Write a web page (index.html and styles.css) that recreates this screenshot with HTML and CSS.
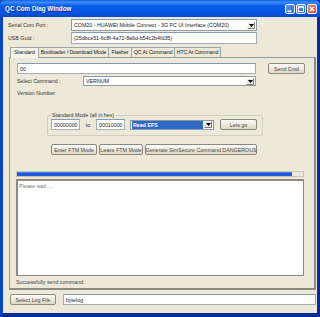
FILE: index.html
```html
<!DOCTYPE html>
<html>
<head>
<meta charset="utf-8">
<link rel="stylesheet" href="styles.css">
</head>
<body>
<div class="window">
  <div class="titlebar">
    <span class="title">QC Com Diag Window</span>
    <div class="tbtns">
      <span class="tb min"><svg width="10" height="10" viewBox="0 0 10 10"><rect x="2.5" y="6.5" width="4" height="1.5" fill="#fff"/></svg></span>
      <span class="tb max"><svg width="10" height="10" viewBox="0 0 10 10"><rect x="2.5" y="2.5" width="5" height="5" fill="none" stroke="#fff" stroke-width="1"/><rect x="2.5" y="2.5" width="5" height="1.3" fill="#fff"/></svg></span>
      <span class="tb close"><svg width="10" height="10" viewBox="0 0 10 10"><path d="M2.8 2.8 L7.2 7.2 M7.2 2.8 L2.8 7.2" stroke="#fff" stroke-width="1.4"/></svg></span>
    </div>
  </div>
  <div class="client">
    <div class="row r-serial">
      <span class="lbl lbl-top">Serial Com Port :</span>
      <div class="combo combo-port"><span class="ctext">COM20 - HUAWEI Mobile Connect - 3G PC UI Interface (COM20)</span><span class="arrow"><svg width="5" height="3" viewBox="0 0 5 3"><path d="M0 0 H5 L2.5 3Z" fill="#000"/></svg></span></div>
    </div>
    <div class="row r-usb">
      <span class="lbl lbl-top">USB Guid :</span>
      <div class="input input-guid">{25dbce51-6c8f-4a72-8a6d-b54c2b4fd35}</div>
    </div>
    <div class="tabs">
      <span class="tab active">Standard</span>
      <span class="tab">Bootloader / Download Mode</span>
      <span class="tab">Flasher</span>
      <span class="tab">QC At Command</span>
      <span class="tab">HTC At Command</span>
    </div>
    <div class="panel">
      <div class="row r-cmd">
        <div class="input input-cmd">00</div>
        <span class="btn btn-send">Send Cmd</span>
      </div>
      <div class="row r-select">
        <span class="lbl lbl-sel">Select Command :</span>
        <div class="combo combo-cmd"><span class="ctext">VERNUM</span><span class="arrow"><svg width="5" height="3" viewBox="0 0 5 3"><path d="M0 0 H5 L2.5 3Z" fill="#000"/></svg></span></div>
      </div>
      <div class="lbl version">Version Number</div>
      <fieldset class="group">
        <legend>Standard Mode (all in hex)</legend>
        <div class="row r-group">
          <div class="input input-hex">00000000</div>
          <span class="to">to</span>
          <div class="input input-hex">00010000</div>
          <div class="combo combo-efs"><span class="ctext sel">Read EFS</span><span class="arrow"><svg width="5" height="3" viewBox="0 0 5 3"><path d="M0 0 H5 L2.5 3Z" fill="#000"/></svg></span></div>
          <span class="btn btn-go">Lets go</span>
        </div>
      </fieldset>
      <div class="row r-ftm">
        <span class="btn btn-enter">Enter FTM Mode</span>
        <span class="btn btn-leave">Leave FTM Mode</span>
        <span class="btn btn-gen">Generate SimSecure Command DANGEROUS</span>
      </div>
      <div class="progress"><div class="fill" style="width:96%"></div></div>
      <div class="log">Please wait ....</div>
      <div class="lbl status">Successfully send command.</div>
    </div>
    <div class="row r-logfile">
      <span class="btn btn-log">Select Log File</span>
      <div class="input input-log">bytelog</div>
    </div>
  </div>
</div>
</body>
</html>
```

FILE: styles.css
```css
* { box-sizing: border-box; }
html, body { margin: 0; padding: 0; background: #fff; }
body { font-family: "Liberation Sans", Arial, sans-serif; font-size: 5.3px; color: #000; }

.window {
  width: 320px; height: 317px;
  background: #0a4fd8;
  border-left: 3px solid #0842c6;
  border-right: 3px solid #0a2a9a;
  border-bottom: 4px solid #0a2a9a;
  display: flex; flex-direction: column;
}
.titlebar {
  height: 17px; flex: none;
  margin: 0 -3px; padding: 0 3px 0 5px;
  background: linear-gradient(#0a5fe8 0%, #3d8cf5 12%, #0a5ce8 35%, #0554e2 75%, #0a48c8 100%);
  border-radius: 5px 5px 0 0;
  display: flex; align-items: center; justify-content: space-between;
}
.title { color: #fff; font-weight: bold; font-size: 6.3px; text-shadow: 1px 1px 0 #0a2a8a; }
.tbtns { display: flex; gap: 1px; margin-top: 1px; }
.tb {
  width: 10px; height: 10px; display: block;
  border: 1px solid #fff; border-radius: 2px;
  background: linear-gradient(135deg, #5a9cf8, #2966e0);
}
.tb svg { display: block; margin: -1px; }
.tb.close { background: linear-gradient(135deg, #ef8a6a, #d2401e); }

.client {
  flex: 1; background: #ece9d8;
  display: flex; flex-direction: column;
  padding: 2px 0 0 3px;
}
.row { display: flex; align-items: center; }
.lbl { color: #333; white-space: nowrap; }
.lbl-top { width: 64px; padding-left: 1px; }
.r-serial { height: 12px; margin-left: 1px; }
.r-usb { height: 12px; margin-top: 1px; margin-left: 1px; }

.input {
  background: #fff; border: 1px solid #a5acb5; border-top-color: #7f9db9;
  padding: 0 2px; white-space: nowrap; overflow: hidden;
  display: flex; align-items: center; color: #222;
}
.combo {
  background: #fff; border: 1px solid #8e9aa8;
  display: flex; align-items: center; justify-content: space-between;
  white-space: nowrap; overflow: hidden; color: #222;
}
.ctext { padding-left: 2px; overflow: hidden; flex: 1; height: 100%; display: flex; align-items: center; }
.arrow {
  width: 8px; height: 7px; margin-right: 1px; flex: none;
  background: #ece9d8; border: 1px solid; border-color: #fff #808080 #808080 #fff;
  display: flex; align-items: center; justify-content: center;
}
.arrow svg { display: block; }
.combo-port { width: 186px; height: 12px; }
.input-guid { width: 186px; height: 12px; }

.tabs { display: flex; margin-top: 3px; margin-left: 4px; height: 10px; position: relative; z-index: 1; }
.tab {
  height: 10px; padding: 0; line-height: 9px; white-space: nowrap; color: #222;
  border: 1px solid #a0a4a8; border-bottom: none; border-left: none;
  background: #ece9d8; text-align: center; letter-spacing: -0.1px;
}
.tab:first-child { border-left: 1px solid #a0a4a8; }
.tab.active { background: #f4f3ee; height: 11px; width: 29px; }
.tabs .tab:nth-child(2) { width: 70px; }
.tabs .tab:nth-child(3) { width: 23px; }
.tabs .tab:nth-child(4) { width: 43px; }
.tabs .tab:nth-child(5) { width: 46px; }

.panel {
  width: 307px; height: 233px; margin-left: 3px; flex: none;
  border: 1px solid #919b9c; border-right: 2px solid #8c8c84; border-bottom: 2px solid #8c8c84;
  background: #ece9d8;
  padding: 5px 0 0 7px;
  display: flex; flex-direction: column;
}
.r-cmd { height: 11px; }
.input-cmd { width: 239px; height: 11px; }
.btn {
  display: flex; align-items: center; justify-content: center; white-space: nowrap;
  border: 1px solid #8a8a80; border-radius: 2px; color: #444;
  background: linear-gradient(#fbfbf8, #ece9d8 60%, #dcd8c6);
  flex: none;
}
.btn-send { width: 37px; height: 11px; margin-left: 12px; }
.r-select { height: 10px; margin-top: 2px; }
.lbl-sel { width: 66px; }
.combo-cmd { width: 173px; height: 10px; }
.version { margin-top: 3px; height: 8px; line-height: 8px; }

.group {
  margin: 15px 0 0 30px; width: 216px; height: 24px;
  border: 1px solid #d0d0bf; border-radius: 2px;
  padding: 0 0 0 3px; min-width: 0;
}
.group legend { padding: 0 1px; margin-left: 0; color: #333; line-height: 6px; }
.r-group { height: 11px; margin-top: 1px; }
.input-hex { width: 29px; height: 11px; }
.to { width: 16px; text-align: center; color: #333; }
.combo-efs { width: 84px; height: 10px; margin-left: 5px; }
.ctext.sel { background: #316ac5; color: #fff; font-weight: bold; margin: 1px; padding-left: 1px; }
.btn-go { width: 37px; height: 11px; margin-left: 6px; }

.r-ftm { height: 11px; margin: 8px 0 0 34px; gap: 2px; }
.btn-enter { width: 46px; height: 11px; }
.btn-leave { width: 44px; height: 11px; }
.btn-gen { width: 112px; height: 11px; }

.progress {
  margin-top: 16px; width: 288px; height: 6px; margin-left: -1px;
  border: 1px solid #c8c4b4; background: #ece9d8;
}
.fill { height: 100%; background: linear-gradient(#5a8ee8, #0a4ed8 50%, #2a63d8); }
.log {
  margin-top: 2px; width: 288px; height: 97px; margin-left: -1px;
  background: #fff; border: 1px solid #888;
  border-top: 2px solid #8c8c84; border-left: 2px solid #8c8c84;
  color: #777; padding: 1px 1px; line-height: 8px;
}
.status { margin-top: 3px; margin-left: -1px; color: #444; }

.r-logfile { height: 11px; margin-top: 4px; margin-left: 4px; }
.btn-log { width: 46px; height: 11px; }
.input-log { width: 253px; height: 11px; margin-left: 7px; }
```
